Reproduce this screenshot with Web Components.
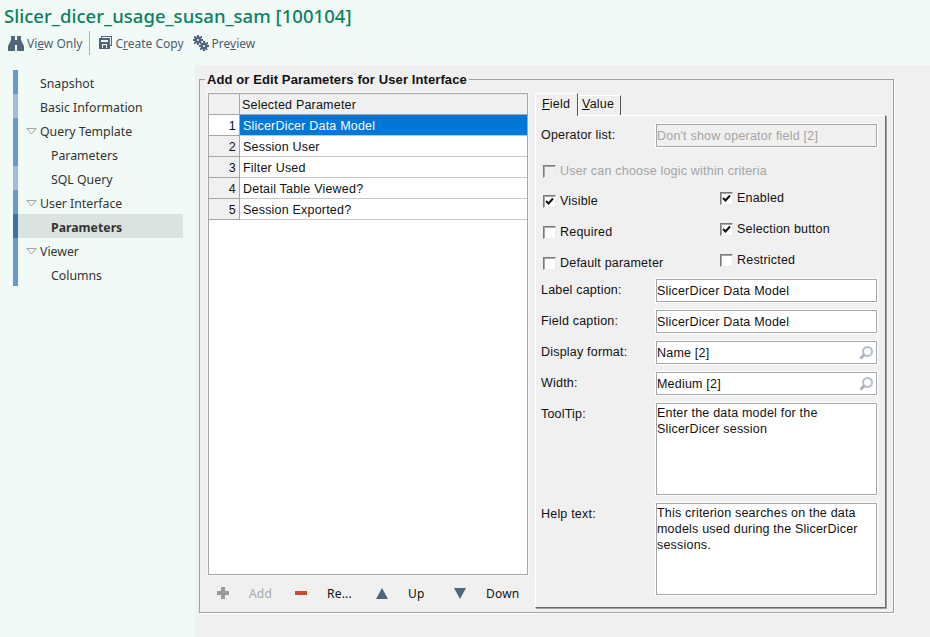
<!DOCTYPE html>
<html>
<head>
<meta charset="utf-8">
<title>Slicer_dicer_usage_susan_sam</title>
<style>
  html, body { margin: 0; height: 100%; }
  body { background: #f2faf7; overflow: hidden; }
</style>
</head>
<body>
<report-editor></report-editor>

<script>
const ICONS = {
  binoculars: `<svg width="16" height="15" viewBox="0 0 16 15"><path fill="#51657c" d="M3 0h4v4h2V0h4v4l3 6v5H9V9H7v6H0v-5l3-6z"/></svg>`,
  copy: `<svg width="14" height="14" viewBox="-1 0 14 14"><path fill="#4f6379" fill-rule="evenodd" d="M2 0h11v10h-2v3H0V2h2zM3 1v1h8v7h1V1zM2 4v2h7V4zM3 8v4h1V9h3v3h1V8z"/></svg>`,
  gears: `<svg width="16" height="16" viewBox="0 0 16 16"><g fill="#51657c"><circle cx="5" cy="5" r="3.400"/><circle cx="11" cy="11" r="3.600"/><path d="M4 0h2v2H4zM4 8h2v2H4zM0 4h2v2H0zM8 4h2v2H8zM1 1l1.500 0 .5 2-2 .5zM7.500 1H9v2l-2 .5zM1 9V7l2 .5L2.500 9zM10 6h2v2h-2zM10 14h2v2h-2zM6 10h2v2H6zM14 10h2v2h-2zM7 7l2 .5-.5 1.500H7zM15 7v2h-1.500l-.5-1.500zM7 15v-2h1.500l.5 1.500zM15 15h-2l-.5-1.500 1-.5z"/></g><circle cx="5" cy="5" r="1" fill="#f2faf7"/><circle cx="11" cy="11" r="1.100" fill="#f2faf7"/></svg>`,
  search: `<svg width="16" height="16" viewBox="0 0 16 16"><circle cx="8.500" cy="6.500" r="4.500" fill="#f6f8fa" stroke="#b8c0c8" stroke-width="2"/><path d="M5.500 9.500l-4 4" stroke="#a8b2bc" stroke-width="3"/></svg>`,
  plus: `<svg width="12" height="12" viewBox="0 0 12 12"><path fill="#9a9a9a" d="M4 0h4v4h4v4H8v4H4V8H0V4h4z"/></svg>`,
  minus: `<svg width="12" height="4" viewBox="0 0 12 4"><path fill="#c44d34" d="M0 0h12v4H0z"/></svg>`,
  up: `<svg width="12" height="11" viewBox="0 0 12 11"><path fill="#4d6680" d="M6 0l6 11H0z"/></svg>`,
  down: `<svg width="12" height="11" viewBox="0 0 12 11"><path fill="#4d6680" d="M0 0h12L6 11z"/></svg>`
}

const ui = '"Liberation Sans", Arial, sans-serif'
const soft = '"Noto Sans", "Open Sans", sans-serif'

customElements.define('tool-button', class extends HTMLElement {
  constructor() {
    super()
    this.attachShadow({ mode: 'open' }).innerHTML = `
      <style>
        :host { display: inline-flex; align-items: center; gap: 3px; font: 12px ${soft}; color: #4d5d6d; }
      </style>
      ${ICONS[this.getAttribute('icon')]}<span><slot></slot></span>`
  }
})

customElements.define('page-header', class extends HTMLElement {
  constructor() {
    super()
    this.attachShadow({ mode: 'open' }).innerHTML = `
      <style>
        :host { display: block; height: 65px; box-sizing: border-box; padding: 4px 0 0 4px; }
        h1 { margin: 0; font: 500 18.5px/23px ${soft}; color: #0b8060; letter-spacing: .03px; }
        .bar { display: flex; align-items: center; height: 26px; margin: 3px 0 0 4px; }
        .sep { width: 1px; height: 24px; background: #a9b0ae; margin: 0 8px 0 7px; }
        tool-button + tool-button { margin-left: 9px; }
      </style>
      <h1>Slicer_dicer_usage_susan_sam [100104]</h1>
      <div class="bar">
        <tool-button icon="binoculars">Vi<u>e</u>w Only</tool-button>
        <span class="sep"></span>
        <tool-button icon="copy">C<u>r</u>eate Copy</tool-button>
        <tool-button icon="gears">Pre<u>v</u>iew</tool-button>
      </div>`
  }
})

customElements.define('nav-item', class extends HTMLElement {
  constructor() {
    super()
    const level = this.getAttribute('level') || '0'
    const open = this.hasAttribute('open')
    this.attachShadow({ mode: 'open' }).innerHTML = `
      <style>
        :host { display: flex; align-items: center; height: 24px; border-left: 5px solid #6699cc; box-sizing: border-box;
          padding: 2px 0 0 ${level === '1' ? 33 : 22}px; font: 12.3px ${soft}; color: #333; position: relative; }
        :host([tone="light"]) { border-left-color: #9dbde0; }
        :host([selected]) { border-left-color: #3d6fa8; background: #dae3e0; font-weight: 700; }
        svg { position: absolute; left: 8px; top: 10px; }
      </style>
      ${open ? `<svg width="11" height="7" viewBox="0 0 11 7"><path fill="none" stroke="#a6a6a6" d="M.8.500h9.400L5.500 6z"/></svg>` : ''}
      <slot></slot>`
  }
})

customElements.define('side-nav', class extends HTMLElement {
  constructor() {
    super()
    this.attachShadow({ mode: 'open' }).innerHTML = `
      <style>:host { display: block; width: 170px; margin: 5px 0 0 13px; }</style>
      <nav-item>Snapshot</nav-item>
      <nav-item tone="light">Basic Information</nav-item>
      <nav-item open>Query Template</nav-item>
      <nav-item level="1">Parameters</nav-item>
      <nav-item level="1" tone="light">SQL Query</nav-item>
      <nav-item open>User Interface</nav-item>
      <nav-item level="1" selected>Parameters</nav-item>
      <nav-item open>Viewer</nav-item>
      <nav-item level="1">Columns</nav-item>`
  }
})

customElements.define('grid-button', class extends HTMLElement {
  constructor() {
    super()
    this.attachShadow({ mode: 'open' }).innerHTML = `
      <style>
        :host { display: flex; align-items: center; font: 12px ${soft}; color: #111; height: 16px; }
        :host([disabled]) { color: #a8a8a8; }
        .i { width: 12px; display: flex; justify-content: center; }
        span { margin-left: 20px; }
      </style>
      <div class="i">${ICONS[this.getAttribute('icon')]}</div><span><slot></slot></span>`
  }
})

customElements.define('param-grid', class extends HTMLElement {
  constructor() {
    super()
    const rows = ['SlicerDicer Data Model', 'Session User', 'Filter Used', 'Detail Table Viewed?', 'Session Exported?']
    this.attachShadow({ mode: 'open' }).innerHTML = `
      <style>
        :host { display: block; width: 320px; font: 12.5px ${ui}; letter-spacing: .2px; color: #111; }
        .box { height: 482px; box-sizing: border-box; border: 1px solid #a6a6a6; background: #fff; box-shadow: 0 0 0 1px #f8f8f8; }
        .row { display: grid; grid-template-columns: 31px 1fr; grid-template-rows: 20px; height: 21px; box-sizing: border-box; border-bottom: 1px solid #c8c8c8; }
        .n, .t { box-sizing: border-box; height: 20px; padding-top: 2px; line-height: 18px; }
        .n { background: #f0f0f0; border-right: 1px solid #a6a6a6; text-align: right; padding-right: 3px; height: 21px; border-bottom: 1px solid #a6a6a6; }
        .t { padding-left: 3px; white-space: nowrap; }
        .head { background: #f0f0f0; border-bottom-color: #a6a6a6; }
        .head .t { padding-left: 2px; }
        .sel .n { background: #fff; }
        .sel .t { background: #0078d7; color: #fff; }
        .tools { display: grid; grid-template-columns: 78px 81px 78px auto; margin: 10px 0 0 9px; }
      </style>
      <div class="box">
        <div class="row head"><div class="n"></div><div class="t">Selected Parameter</div></div>
        ${rows.map((r, i) => `<div class="row ${i === 0 ? 'sel' : ''}"><div class="n">${i + 1}</div><div class="t">${r}</div></div>`).join('')}
      </div>
      <div class="tools">
        <grid-button icon="plus" disabled>Add</grid-button>
        <grid-button icon="minus">Re...</grid-button>
        <grid-button icon="up">Up</grid-button>
        <grid-button icon="down">Down</grid-button>
      </div>`
  }
})

customElements.define('check-box', class extends HTMLElement {
  constructor() {
    super()
    this.attachShadow({ mode: 'open' }).innerHTML = `
      <style>
        :host { display: flex; align-items: center; gap: 4px; height: 16px; color: #111; }
        :host([disabled]) { color: #a4a4a4; }
        .b { width: 13px; height: 13px; box-sizing: border-box; background: #fff; border: 1px solid; border-color: #7a7a7a #ececec #ececec #7a7a7a; box-shadow: inset 1px 1px 0 #a8a8a8; display: flex; align-items: center; justify-content: center; }
        :host([disabled]) .b { background: #f0f0f0; }
        path { fill: none; stroke: #111; stroke-width: 2; }
      </style>
      <div class="b">${this.hasAttribute('checked') ? '<svg width="9" height="9" viewBox="0 0 9 9"><path d="M1 4l2.500 2.500L8 1.500"/></svg>' : ''}</div>
      <slot></slot>`
  }
})

customElements.define('form-row', class extends HTMLElement {
  constructor() {
    super()
    const h = this.getAttribute('height') || '23'
    const lookup = this.hasAttribute('lookup')
    this.attachShadow({ mode: 'open' }).innerHTML = `
      <style>
        :host { display: grid; grid-template-columns: 115px 221px; height: ${h}px; }
        label { padding-top: 4px; line-height: 15px; }
        .f { position: relative; box-sizing: border-box; border: 1px solid #a6a6a6; box-shadow: 0 0 0 1px #fff; background: #fff; padding: 4px 0 0 0; line-height: 15px; white-space: nowrap; height: ${h}px; }
        :host([multi]) .f { white-space: normal; line-height: 16px; padding: 1px 0 0 0; }
        :host([disabled]) .f { background: #f0f0f0; color: #a4a4a4; }
        svg { position: absolute; right: 1px; top: 3px; }
      </style>
      <label>${this.getAttribute('label')}</label>
      <div class="f"><slot></slot>${lookup ? ICONS.search : ''}</div>`
  }
})

customElements.define('field-tabs', class extends HTMLElement {
  constructor() {
    super()
    this.attachShadow({ mode: 'open' }).innerHTML = `
      <style>
        :host { display: block; width: 351px; font: 12.5px ${ui}; letter-spacing: .2px; color: #111; }
        .tabs { display: flex; height: 22px; align-items: flex-end; position: relative; z-index: 1; }
        .tab { box-sizing: border-box; width: 43px; height: 20px; line-height: 15px; padding: 1px 0 0 3px; background: #f0f0f0; border: 1px solid; border-color: #fff #555 transparent #fff; border-bottom: 0; }
        .tab.on { height: 23px; margin-bottom: -1px; padding: 3px 0 0 6px; }
        .panel { box-sizing: border-box; height: 493px; border: 1px solid; border-color: #fff #696969 #696969 #fff; padding: 8px 8px 0 5px; background: #f0f0f0; box-shadow: 1px 1px 0 #a0a0a0; }
        .checks { display: grid; grid-template-columns: 177px 1fr; margin: 0 0 0 2px; }
        .col { display: flex; flex-direction: column; gap: 15px; }
        .col.left { padding-top: 14px; }
        .col.right { padding-top: 11px; }
        .logic { margin: 16px 0 0 2px; }
        .fields { display: flex; flex-direction: column; gap: 8px; margin-top: 8px; }
      </style>
      <div class="tabs">
        <div class="tab on"><u>F</u>ield</div>
        <div class="tab"><u>V</u>alue</div>
      </div>
      <div class="panel">
        <form-row label="Operator list:" disabled>Don't show operator field [2]</form-row>
        <check-box class="logic" disabled>User can choose logic within criteria</check-box>
        <div class="checks">
          <div class="col left">
            <check-box checked>Visible</check-box>
            <check-box>Required</check-box>
            <check-box>Default parameter</check-box>
          </div>
          <div class="col right">
            <check-box checked>Enabled</check-box>
            <check-box checked>Selection button</check-box>
            <check-box>Restricted</check-box>
          </div>
        </div>
        <div class="fields">
          <form-row label="Label caption:">SlicerDicer Data Model</form-row>
          <form-row label="Field caption:">SlicerDicer Data Model</form-row>
          <form-row label="Display format:" lookup>Name [2]</form-row>
          <form-row label="Width:" lookup>Medium [2]</form-row>
          <form-row label="ToolTip:" height="92" multi>Enter the data model for the SlicerDicer session</form-row>
          <form-row label="Help text:" height="92" multi>This criterion searches on the data models used during the SlicerDicer sessions.</form-row>
        </div>
      </div>`
  }
})

customElements.define('param-group', class extends HTMLElement {
  constructor() {
    super()
    this.attachShadow({ mode: 'open' }).innerHTML = `
      <style>
        :host { display: block; background: #f0f0f0; flex: 1; padding: 14px 36px 0 4px; }
        .frame { position: relative; height: 534px; box-sizing: border-box; border: 1px solid #a0a0a0; box-shadow: 1px 1px 0 #fff; display: flex; padding: 13px 0 0 8px; gap: 7px; }
        .legend { position: absolute; left: 5px; top: -8px; padding: 0 2px; background: #f0f0f0; font: 700 13px/15px ${ui}; letter-spacing: .1px; color: #111; }
      </style>
      <div class="frame">
        <div class="legend">Add or Edit Parameters for User Interface</div>
        <param-grid></param-grid>
        <field-tabs></field-tabs>
      </div>`
  }
})

customElements.define('report-editor', class extends HTMLElement {
  constructor() {
    super()
    this.attachShadow({ mode: 'open' }).innerHTML = `
      <style>
        :host { display: flex; flex-direction: column; height: 100vh; }
        .main { display: flex; flex: 1; }
        .side { width: 195px; }
      </style>
      <page-header></page-header>
      <div class="main">
        <div class="side"><side-nav></side-nav></div>
        <param-group></param-group>
      </div>`
  }
})
</script>
</body>
</html>
